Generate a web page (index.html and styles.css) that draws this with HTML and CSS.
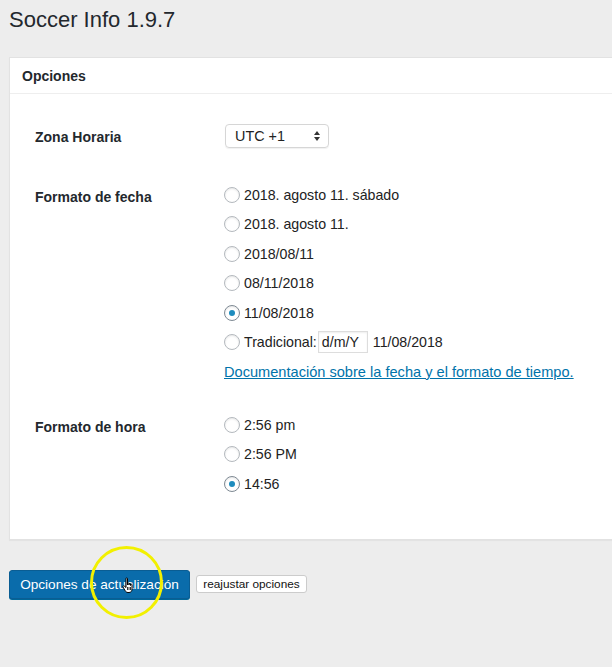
FILE: index.html
```html
<!DOCTYPE html>
<html lang="es">
<head>
<meta charset="utf-8">
<title>Soccer Info</title>
<link rel="stylesheet" href="styles.css">
</head>
<body>
<div class="wrap">
  <h1 class="title">Soccer Info 1.9.7</h1>
  <div class="panel">
    <div class="panel-head">Opciones</div>
    <div class="panel-body">
      <div class="row row-tz">
        <div class="label">Zona Horaria</div>
        <div class="field">
          <div class="select">
            <span>UTC +1</span>
            <svg class="arrows" width="8" height="12" viewBox="0 0 8 12"><path d="M4 1 L7 5 H1 Z M4 11 L7 7 H1 Z" fill="#333"/></svg>
          </div>
        </div>
      </div>
      <div class="row row-date">
        <div class="label">Formato de fecha</div>
        <div class="field options">
          <div class="opt"><span class="radio"></span>2018. agosto 11. sábado</div>
          <div class="opt"><span class="radio"></span>2018. agosto 11.</div>
          <div class="opt"><span class="radio"></span>2018/08/11</div>
          <div class="opt"><span class="radio"></span>08/11/2018</div>
          <div class="opt"><span class="radio checked"></span>11/08/2018</div>
          <div class="opt"><span class="radio"></span>Tradicional:<span class="text-input">d/m/Y</span><span class="preview">11/08/2018</span></div>
          <div class="opt"><a class="doc-link" href="#">Documentación sobre la fecha y el formato de tiempo.</a></div>
        </div>
      </div>
      <div class="row row-time">
        <div class="label">Formato de hora</div>
        <div class="field options">
          <div class="opt"><span class="radio"></span>2:56 pm</div>
          <div class="opt"><span class="radio"></span>2:56 PM</div>
          <div class="opt"><span class="radio checked"></span>14:56</div>
        </div>
      </div>
    </div>
  </div>
  <div class="actions">
    <button class="btn-primary">Opciones de actualización</button>
    <button class="btn-secondary">reajustar opciones</button>
    <span class="highlight"></span>
    <svg class="cursor" width="14" height="17" viewBox="0 0 14 17"><path d="M4 1.5c0-.8 1.5-.8 1.5 0V8V6.5c0-.8 1.5-.8 1.5 0V8V7c0-.8 1.5-.8 1.5 0V8.5V7.8c0-.8 1.5-.8 1.5 0V12c0 2-1 3.5-3 3.5H6c-1.5 0-2.2-.8-3-2L1 10c-.5-.8.5-1.6 1.2-1L4 10.5Z" fill="#fff" stroke="#000" stroke-width="1"/><path d="M5.5 10v3M7 10v3M8.5 10v3" stroke="#000" stroke-width=".8"/></svg>
  </div>
</div>
</body>
</html>
```
FILE: styles.css
```css
html, body {
  margin: 0;
  padding: 0;
}
body {
  background: #ededed;
  font-family: "Liberation Sans", Arial, sans-serif;
  font-size: 14px;
  color: #23282d;
  width: 612px;
  height: 667px;
  overflow: hidden;
}
.wrap {
  padding-left: 9px;
  position: relative;
}
.title {
  margin: 0;
  padding-top: 5px;
  font-size: 22px;
  font-weight: 400;
  line-height: 30px;
  height: 52px;
  color: #23282d;
}
.panel {
  background: #fff;
  border: 1px solid #e2e2e2;
  margin-right: -20px;
  box-shadow: 0 1px 1px rgba(0,0,0,0.04);
}
.panel-head {
  height: 35px;
  line-height: 37px;
  padding-left: 12px;
  font-weight: 700;
  font-size: 14px;
  border-bottom: 1px solid #eee;
}
.panel-body {
  padding: 30px 0 40px 25px;
}
.row {
  display: grid;
  grid-template-columns: 189px 1fr;
}
.label {
  font-weight: 700;
  color: #23282d;
}
.row-tz {
  height: 24px;
}
.row-tz .label {
  line-height: 24px;
  padding-top: 1px;
}
.row-date {
  margin-top: 32px;
}
.row-time {
  margin-top: 23.5px;
}
.row-date .label, .row-time .label {
  line-height: 28px;
  padding-top: 3px;
}
.select {
  height: 22px;
  border: 1px solid #d6d6d6;
  border-radius: 4px;
  box-shadow: 0 1px 1px rgba(0,0,0,0.06);
  display: flex;
  align-items: center;
  justify-content: space-between;
  padding: 0 7px 0 9px;
  box-sizing: content-box;
  width: 86px;
  margin-left: 1px;
  color: #222;
  font-size: 14.4px;
}
.arrows {
  display: block;
}
.options {
  display: flex;
  flex-direction: column;
}
.opt {
  height: 29.5px;
  display: flex;
  align-items: center;
  white-space: nowrap;
  color: #222;
  font-size: 14.2px;
}
.radio {
  width: 14px;
  height: 14px;
  border: 1px solid #b4b9be;
  border-radius: 50%;
  margin-right: 4px;
  box-shadow: inset 0 1px 2px rgba(0,0,0,0.1);
  position: relative;
  flex: none;
  background: #fff;
}
.radio.checked {
  border-color: #7e8993;
}
.radio.checked::after {
  content: "";
  position: absolute;
  left: 4px;
  top: 4px;
  width: 6px;
  height: 6px;
  border-radius: 50%;
  background: #1e8cbe;
}
.text-input {
  display: inline-block;
  height: 20px;
  line-height: 20px;
  border: 1px solid #ddd;
  padding: 0 2px 0 3px;
  width: 43px;
  margin-left: 1px;
  box-shadow: inset 0 1px 2px rgba(0,0,0,0.07);
}
.preview {
  margin-left: 5px;
}
.doc-link {
  color: #0073aa;
  text-decoration: underline;
  font-size: 14.6px;
}
.actions {
  margin-top: 30px;
  display: flex;
  align-items: center;
  gap: 6px;
  position: relative;
}
.btn-primary {
  font-family: "Liberation Sans", Arial, sans-serif;
  font-size: 13.6px;
  height: 29px;
  width: 181px;
  padding: 0;
  background: #0a6cab;
  color: #fff;
  border: 1px solid #0a5d93;
  border-radius: 3px;
  box-shadow: 0 1px 0 #006799;
}
.btn-secondary {
  font-family: "Liberation Sans", Arial, sans-serif;
  font-size: 11.8px;
  height: 18px;
  width: 111px;
  padding: 0;
  background: #fff;
  color: #111;
  border: 1px solid #ccc;
  border-radius: 3px;
}
.highlight {
  position: absolute;
  left: 81px;
  top: -24px;
  width: 67px;
  height: 67px;
  border: 3px solid #f2f000;
  border-radius: 50%;
  pointer-events: none;
}
.cursor {
  position: absolute;
  left: 113px;
  top: 7px;
}
```
